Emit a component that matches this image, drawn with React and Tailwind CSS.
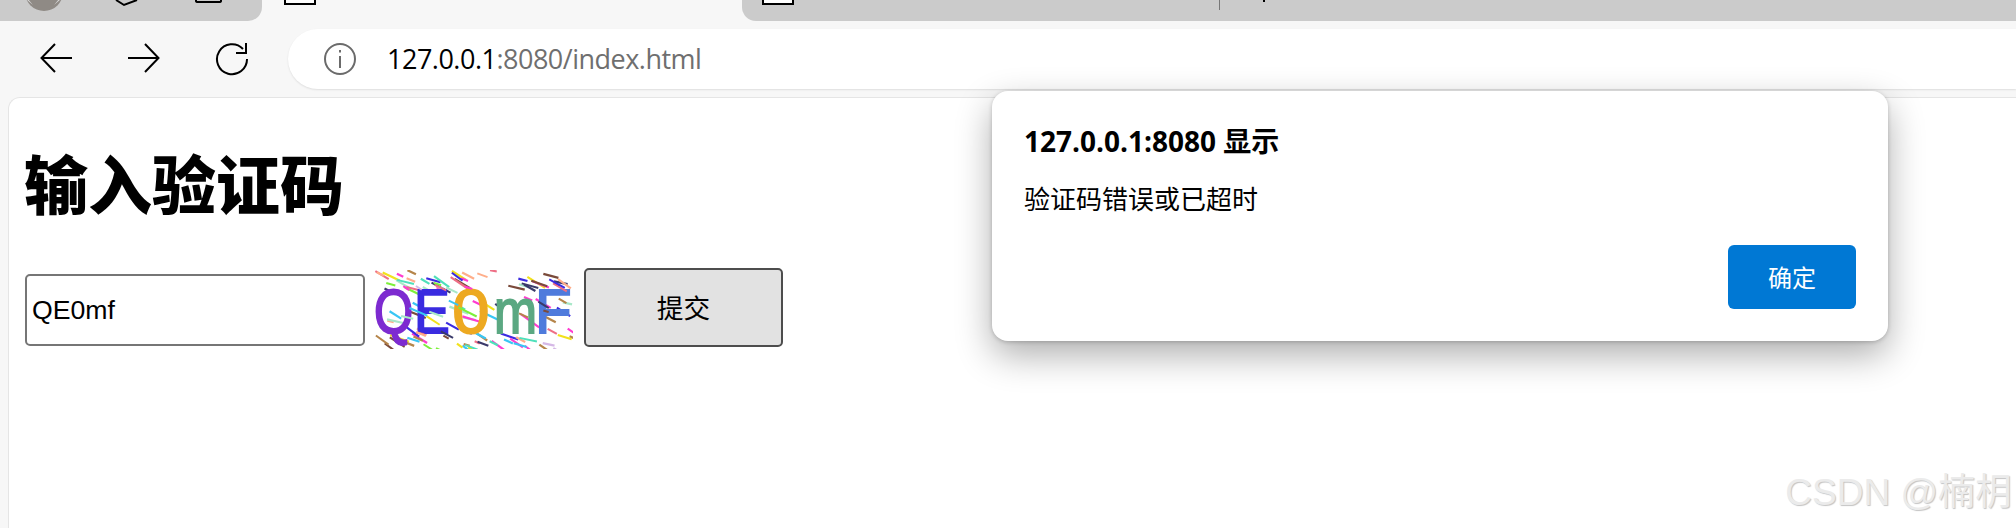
const SANS = 'font-["Liberation_Sans","Noto_Sans_CJK_SC",sans-serif]'

// deterministic noise for the captcha picture
const NOISE_COLORS = ['#ff3bd0', '#4fe0bb', '#3b2be0', '#b5854a', '#ee6f86', '#38c6f4', '#7a4a3a', '#7cf03a', '#d5b8e6', '#f2e21b', '#3a3a6a', '#ffae8a', '#a8e8c8']
function makeNoise(count) {
  let seed = 4242
  const rnd = () => {
    seed = (seed * 1103515245 + 12345) % 2147483648
    return seed / 2147483648
  }
  const lines = []
  for (let i = 0; i < count; i++) {
    const x = rnd() * 199
    // most of the noise sits above and below the letters
    const band = rnd()
    const y = band < 0.38 ? rnd() * 18 : band < 0.68 ? 62 + rnd() * 17 : 18 + rnd() * 44
    const len = 5 + rnd() * 14
    const slope = 0.2 + rnd() * 0.55
    lines.push({
      x1: x, y1: y,
      x2: x + len, y2: y + len * slope,
      color: NOISE_COLORS[Math.floor(rnd() * NOISE_COLORS.length)],
    })
  }
  return lines
}
const noise = makeNoise(120)

const LETTERS = [
  { ch: 'Q', x: 0, sx: 0.8, color: '#7d2bd0' },
  { ch: 'E', x: 40, sx: 0.85, color: '#3a2be0' },
  { ch: '0', x: 78.5, sx: 1.05, color: '#eda921' },
  { ch: 'm', x: 120, sx: 0.82, color: '#5ba882' },
  { ch: 'F', x: 161, sx: 0.95, color: '#4f7bdc' },
]

function Captcha() {
  return (
    <svg width="199" height="79" viewBox="0 0 199 79" className="mt-[2px] ml-[9px] bg-white blur-[0.6px] shrink-0">
      {noise.slice(0, 85).map((l, i) => (
        <line key={i} x1={l.x1} y1={l.y1} x2={l.x2} y2={l.y2} stroke={l.color} strokeWidth="2.2" />
      ))}
      <g fontFamily="Liberation Sans, sans-serif" fontSize="63" strokeWidth="2">
        {LETTERS.map(l => (
          <text key={l.ch} transform={`translate(${l.x},63) scale(${l.sx},1)`} fill={l.color} stroke={l.color}>{l.ch}</text>
        ))}
      </g>
      {noise.slice(85).map((l, i) => (
        <line key={i} x1={l.x1} y1={l.y1} x2={l.x2} y2={l.y2} stroke={l.color} strokeWidth="2" />
      ))}
    </svg>
  )
}

function TabSquare() {
  return <div className="w-[32px] h-[5px] bg-white border-2 border-t-0 border-black" />
}

function TabStrip() {
  return (
    <div className="flex h-[21px] shrink-0">
      <div className="w-[262px] bg-[#cbcbcb] rounded-br-[14px] overflow-hidden">
        <svg width="262" height="21" viewBox="0 0 262 21">
          <circle cx="44" cy="-8" r="19" fill="#8f8a85" />
          <path d="M26 -1 L33 5 L28 -1Z M61 -1 L54 5 L59 -1Z" fill="#d8d8d8" />
          <path d="M116 0 L124 5 L137 0" fill="none" stroke="#000" strokeWidth="2" />
          <path d="M196 -3 V1 Q196 2 198 2 H219 Q221 2 221 1 V-3" fill="none" stroke="#000" strokeWidth="2" />
        </svg>
      </div>
      <div className="w-[480px] pl-[22px]">
        <TabSquare />
      </div>
      <div className="flex-1 bg-[#cbcbcb] rounded-bl-[14px] pl-[20px] flex items-start">
        <TabSquare />
        <div className="ml-[425px] w-px h-[10px] bg-[#777]" />
        <div className="ml-[43px] w-[2px] h-[2px] bg-black" />
      </div>
    </div>
  )
}

function Toolbar() {
  return (
    <div className="flex items-center h-[76px] shrink-0 pl-[40px]">
      <svg width="32" height="30" viewBox="0 0 32 30" fill="none" stroke="#000" strokeWidth="2" className="mb-[2px] shrink-0">
        <path d="M32 15 H2 M15 1 L1.5 15 L15 29" />
      </svg>
      <svg width="32" height="30" viewBox="0 0 32 30" fill="none" stroke="#000" strokeWidth="2" className="mb-[2px] ml-[56px] shrink-0">
        <path d="M0 15 H30 M17 1 L30.5 15 L17 29" />
      </svg>
      <svg width="34" height="34" viewBox="0 0 34 34" fill="none" stroke="#000" strokeWidth="2" className="ml-[55px] shrink-0">
        <path d="M28 7 A15 15 0 1 0 32 17" />
        <path d="M21 11 H31 V1" />
      </svg>
      <div className="flex items-center flex-1 h-[60px] ml-[39px] pl-[36px] bg-white rounded-l-[30px] shadow-[0_1px_2px_rgba(0,0,0,0.1)]">
        <svg width="32" height="32" viewBox="0 0 32 32" fill="none" stroke="#6b6b6b" strokeWidth="2" className="shrink-0">
          <circle cx="16" cy="16" r="15" />
          <path d="M16 13 V25 M16 7 V9.5" />
        </svg>
        <div className='ml-[31px] text-[27px] font-["Open_Sans",sans-serif] text-[#6f6f6f] tracking-[-0.5px]'>
          <span className="text-black">127.0.0.1</span>:8080/index.html
        </div>
      </div>
    </div>
  )
}

function AlertDialog() {
  return (
    <div className={`absolute left-[992px] top-[91px] w-[896px] h-[250px] flex flex-col rounded-[16px] bg-white pt-[34px] px-[32px] shadow-[0_14px_36px_rgba(0,0,0,0.32),0_1px_4px_rgba(0,0,0,0.2)] font-["Open_Sans","Noto_Sans_CJK_SC",sans-serif]`}>
      <div className="text-[28px] leading-[32px] font-bold text-black">127.0.0.1:8080 显示</div>
      <div className='mt-[25px] text-[26px] leading-[32px] text-black font-["Noto_Sans_CJK_SC",sans-serif]'>验证码错误或已超时</div>
      <button className='self-end mt-[31px] w-[128px] h-[64px] rounded-[6px] bg-[#0078d4] text-white text-[24px] font-["Noto_Sans_CJK_SC",sans-serif]'>确定</button>
    </div>
  )
}

export default function App() {
  return (
    <div className={`relative flex flex-col w-full h-[528px] overflow-hidden bg-[#f7f7f7] ${SANS}`}>
      <TabStrip />
      <Toolbar />

      <div className="flex-1 ml-2 pl-[16px] bg-white rounded-tl-[12px] border-t border-l border-[#e5e5e5]">
        <h1 className='mt-[43px] -ml-px text-[64px] leading-[80px] font-black text-black font-["Noto_Sans_CJK_SC",sans-serif]'>输入验证码</h1>
        <div className="flex items-start mt-[47px]">
          <input
            readOnly
            value="QE0mf"
            className="mt-[6px] w-[340px] h-[72px] px-[5px] text-[26.67px] text-black bg-white border-2 border-[#767676] rounded-[5px] outline-none"
          />
          <Captcha />
          <button className="ml-[11px] w-[199px] h-[79px] pt-[3px] text-[26.67px] text-black bg-[#e2e2e2] border-[2.5px] border-[#4d4d4d] rounded-[5px]">
            提交
          </button>
        </div>
      </div>

      <AlertDialog />

      <div className="absolute right-[4px] top-[470px] text-[37px] leading-[46px] text-[#ebebeb] [text-shadow:1px_1px_1px_#c4c4c4]">
        CSDN @楠枂
      </div>
    </div>
  )
}
